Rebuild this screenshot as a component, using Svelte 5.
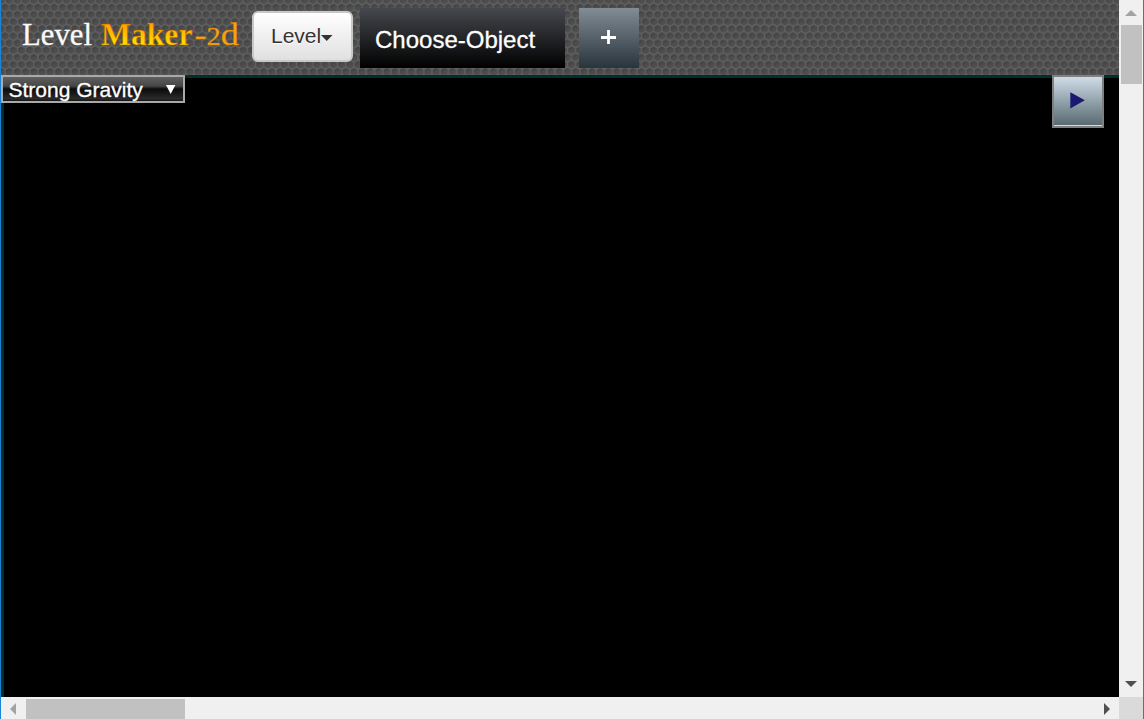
<script lang="ts">
  let gravity = $state('Strong Gravity');
  let playing = $state(false);
</script>

<div class="window">
  <div class="view">
    <header>
      <svg class="mesh" width="1118" height="75" aria-hidden="true">
        <defs>
          <linearGradient id="cell" x1="0" y1="0" x2=".6" y2="1">
            <stop offset="0" stop-color="#3b3b3b" />
            <stop offset=".55" stop-color="#4b4b4b" />
            <stop offset="1" stop-color="#525252" />
          </linearGradient>
          <pattern id="hex" x="4.1" y="-3.5" width="8.21" height="14.3" patternUnits="userSpaceOnUse">
            <rect width="8.21" height="14.3" fill="#606060" />
            <g fill="url(#cell)" stroke="#414141" stroke-width=".5">
              <path d="M4.1 .3L7.2 2V5.5L4.1 7.2L1 5.5V2Z" />
              <path d="M0 7.45L3.1 9.15V12.65L0 14.3L-3.1 12.65V9.15Z" />
              <path d="M8.21 7.45L11.3 9.15V12.65L8.21 14.3L5.1 12.65V9.15Z" />
            </g>
          </pattern>
        </defs>
        <rect width="1118" height="75" fill="url(#hex)" />
      </svg>
      <svg class="logo" width="230" height="40" role="img" aria-label="Level Maker-2d">
        <defs>
          <linearGradient id="gold" x1="0" y1="0" x2="0" y2="1">
            <stop offset=".2" stop-color="#ffa000" />
            <stop offset=".8" stop-color="#ffe000" />
          </linearGradient>
        </defs>
        <text class="white" x="0" y="30" textLength="70" lengthAdjust="spacingAndGlyphs">Level</text>
        <text class="bold" x="79" y="30" textLength="91.500" lengthAdjust="spacingAndGlyphs">Maker</text>
        <text class="thin" x="172.500" y="30" textLength="44.500" lengthAdjust="spacingAndGlyphs">-<tspan class="two">2</tspan>d</text>
      </svg>
      <button class="level"><span>Level</span><svg width="12" height="6"><path d="M0 0H11.500L5.750 6Z" fill="#333" /></svg></button>
      <button class="choose">Choose-Object</button>
      <button class="add" aria-label="Add"><svg width="16" height="14"><path d="M0 7.5H15M7.5 0V14" stroke="#fff" stroke-width="2.8" /></svg></button>
    </header>
    <main>
      <button class="gravity"><span>{gravity}</span><svg width="10" height="9"><path d="M0 0H9.4L4.7 9Z" fill="#fff" /></svg></button>
      <button class="play" aria-label="Play" onclick={() => (playing = !playing)}><svg width="15" height="17"><path d="M.3 .2L14.8 8.3L.3 16.6Z" fill="#191970" /></svg></button>
    </main>
  </div>
  <div class="vbar">
    <svg width="12" height="6"><path d="M0 6L6 0L12 6Z" fill="#a3a3a3" /></svg>
    <div class="vthumb"></div>
    <svg class="down" width="12" height="6"><path d="M0 0H12L6 6Z" fill="#505050" /></svg>
  </div>
  <div class="hbar">
    <svg width="6" height="12"><path d="M6 0V12L0 6Z" fill="#a3a3a3" /></svg>
    <div class="hthumb"></div>
    <svg class="right" width="6" height="12"><path d="M0 0V12L6 6Z" fill="#505050" /></svg>
  </div>
  <div class="corner"></div>
</div>

<style>
  :global(body) { margin: 0; overflow: hidden; background: #000; }
  .window {
    box-sizing: border-box; width: 1144px; height: 719px;
    border-left: 1px solid #1883d7; border-right: 1px solid #1883d7;
    display: grid; grid-template: 697px 22px / 1118px 24px;
    font-family: "Liberation Sans", Arial, sans-serif;
  }
  svg { display: block; flex: none; }
  button { box-sizing: border-box; margin: 0; padding: 0; border: 0; font-family: inherit; display: flex; align-items: center; }
  .view { background: #000; overflow: hidden; }
  header { position: relative; height: 75px; display: flex; align-items: flex-start; overflow: hidden; background: #505050; }
  .mesh { position: absolute; left: 0; top: 0; }
  header > :not(.mesh) { position: relative; }
  .logo { margin: 15px 0 0 21px; font: 32px "Liberation Serif", Georgia, serif; overflow: visible; }
  .white { fill: #fafafa; stroke: #fafafa; stroke-width: .3px; }
  .bold { font-weight: 700; fill: url(#gold); stroke: #a85000; stroke-width: .5px; }
  .thin { fill: #f9a40c; stroke: #d98000; stroke-width: .3px; }
  .two { font-size: 25px; }
  .level {
    width: 101px; height: 51px; margin-top: 11px; padding: 0 0 2px 17px;
    border: 2px solid #c8c8c8; border-radius: 6px; background: linear-gradient(#fff, #e0e0e0);
    color: #333; font-size: 21px; text-shadow: 0 1px 1px #fff;
  }
  .level svg { margin-top: 4px; }
  .choose {
    width: 205px; height: 60px; margin: 8px 0 0 7px; padding: 4px 0 0 15px;
    background: linear-gradient(#45484d, #000); color: #fff; font-size: 24px; -webkit-text-stroke: .3px #fff;
  }
  .add { width: 60px; height: 60px; margin: 8px 0 0 14px; padding: 0 0 2px 22px; background: linear-gradient(#828c95, #28343b); }
  main {
    box-sizing: border-box; height: 622px; border-top: 3px solid #002f2f; border-left: 3px solid #002f2f;
    display: flex; justify-content: space-between; align-items: flex-start;
  }
  .gravity {
    width: 184px; height: 28px; margin: -3px 0 0 -3px; padding: 1px 7px 0 5.5px; position: relative;
    border: 2px solid #a9a9a9; background: linear-gradient(#606060 0, #454545 38%, #0c0c0c 50%, #1c1c1c 72%, #2b2b2b 90%, #151515 100%);
    color: #fff; font-size: 21px; justify-content: space-between; white-space: nowrap; -webkit-text-stroke: .3px #fff;
  }
  .gravity svg { margin-bottom: 1px; }
  .play {
    width: 52px; height: 53px; margin: -3px 15px 0 0; padding: 0 0 2px 16px; position: relative;
    border: 2px solid #808080; background: linear-gradient(#cedce7 0, #596a72 48px, #cedce7 48px);
  }
  .vbar { background: #f0f0f0; display: flex; flex-direction: column; align-items: center; padding: 10px 0; box-sizing: border-box; }
  .vthumb { width: 21px; height: 59px; margin-top: 9px; background: #c1c1c1; }
  .down { margin-top: auto; }
  .hbar { background: #f0f0f0; display: flex; align-items: center; padding: 2px 9px 0 9px; box-sizing: border-box; }
  .hthumb { width: 159px; height: 20px; margin-left: 10px; background: #c1c1c1; }
  .right { margin-left: auto; }
  .hbar svg { margin-bottom: 1px; }
  .corner { background: #dadada; }
</style>
